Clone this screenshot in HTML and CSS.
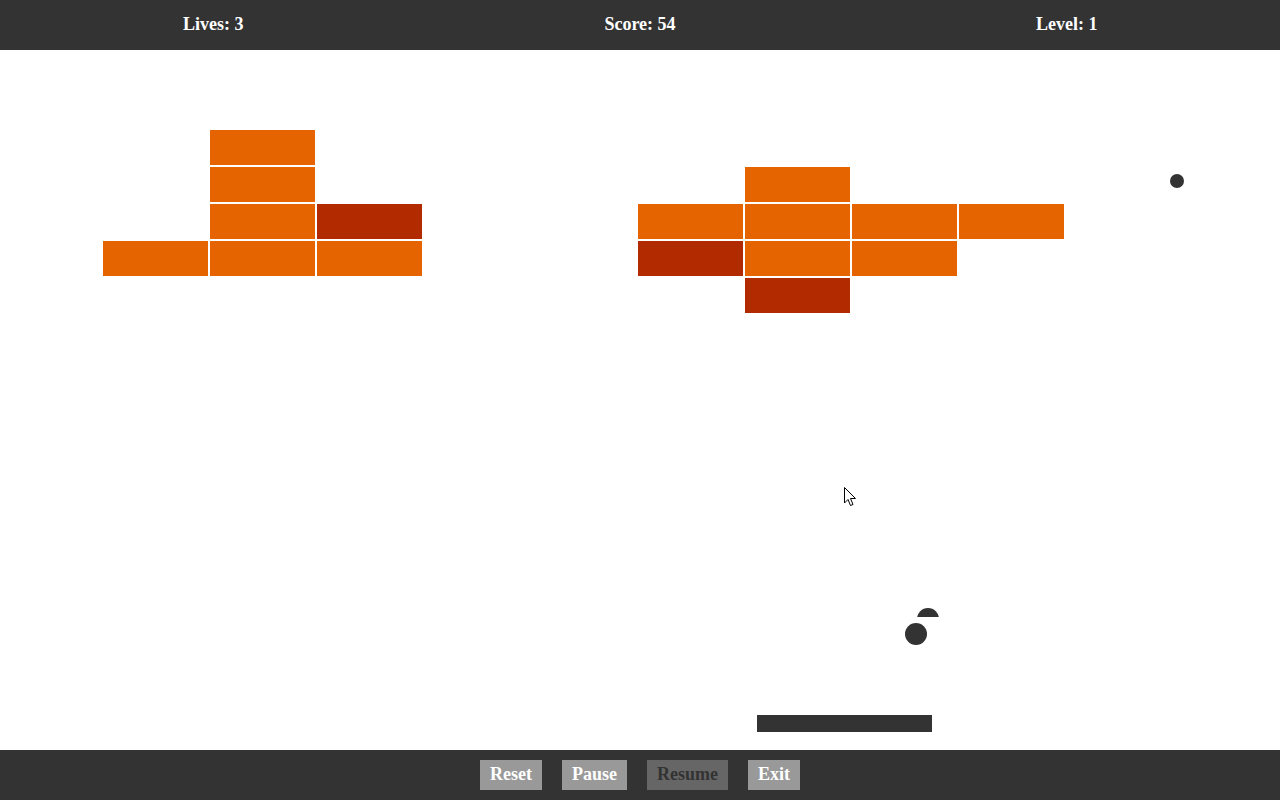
FILE: index.html
```html
<!DOCTYPE html>
<html>
<head>
<meta charset="utf-8">
<title>Breakout</title>
<link rel="stylesheet" href="styles.css">
</head>
<body>
<header class="hud">
  <div class="hud-item">Lives: 3</div>
  <div class="hud-item">Score: 54</div>
  <div class="hud-item">Level: 1</div>
</header>
<main class="field">
  <div class="bricks">
    <div></div><div class="brick"></div><div></div><div></div><div></div><div></div><div></div><div></div><div></div><div></div>
    <div></div><div class="brick"></div><div></div><div></div><div></div><div></div><div class="brick"></div><div></div><div></div><div></div>
    <div></div><div class="brick"></div><div class="brick hard"></div><div></div><div></div><div class="brick"></div><div class="brick"></div><div class="brick"></div><div class="brick"></div><div></div>
    <div class="brick"></div><div class="brick"></div><div class="brick"></div><div></div><div></div><div class="brick hard"></div><div class="brick"></div><div class="brick"></div><div></div><div></div>
    <div></div><div></div><div></div><div></div><div></div><div></div><div class="brick hard"></div><div></div><div></div><div></div>
  </div>
  <div class="ball small" style="left:1170px;top:124px"></div>
  <div class="ball" style="left:905px;top:573px"></div>
  <div class="half-ball" style="left:917px;top:558px"><div class="half-inner"></div></div>
  <div class="paddle" style="left:757px;top:665px"></div>
  <svg class="cursor" style="left:844px;top:437px" width="13" height="20" viewBox="0 0 13 20"><path d="M0.5 0.5 L0.5 16 L4 12.5 L6.5 18.5 L9 17.5 L6.5 11.5 L11.5 11.5 Z" fill="#fff" stroke="#000" stroke-width="1"/></svg>
</main>
<footer class="controls">
  <button class="btn">Reset</button>
  <button class="btn">Pause</button>
  <button class="btn" disabled>Resume</button>
  <button class="btn">Exit</button>
</footer>
</body>
</html>
```
FILE: styles.css
```css
* { box-sizing: border-box; }
html, body { margin: 0; padding: 0; }
body {
  width: 1280px;
  height: 800px;
  overflow: hidden;
  font-family: "Liberation Serif", "Times New Roman", serif;
  background: #fff;
  display: flex;
  flex-direction: column;
}
.hud {
  height: 50px;
  background: #333333;
  color: #fff;
  display: flex;
  align-items: center;
  font-weight: bold;
  font-size: 18px;
}
.hud-item {
  flex: 1;
  text-align: center;
  padding-bottom: 2px;
}
.field {
  position: relative;
  height: 700px;
  background: #fff;
}
.bricks {
  display: grid;
  grid-template-columns: repeat(10, 105px);
  grid-auto-rows: 35px;
  gap: 2px;
  padding: 80px 0 0 103px;
}
.brick { background: #e66400; }
.brick.hard { background: #b12a00; }
.ball {
  position: absolute;
  width: 22px;
  height: 22px;
  border-radius: 50%;
  background: #333;
}
.ball.small {
  width: 14px;
  height: 14px;
}
.half-ball {
  position: absolute;
  width: 22px;
  height: 9px;
  overflow: hidden;
}
.half-inner {
  width: 22px;
  height: 22px;
  border-radius: 50%;
  background: #333;
}
.paddle {
  position: absolute;
  width: 175px;
  height: 17px;
  background: #333;
}
.cursor { position: absolute; }
.controls {
  height: 50px;
  background: #333333;
  display: flex;
  justify-content: center;
  align-items: center;
  gap: 20px;
}
.btn {
  font-family: "Liberation Serif", "Times New Roman", serif;
  font-weight: bold;
  font-size: 18px;
  line-height: 20px;
  color: #fff;
  background: #999999;
  border: none;
  padding: 4px 10px 6px;
  height: 30px;
}
.btn:disabled {
  background: #666666;
  color: #333333;
}
```
